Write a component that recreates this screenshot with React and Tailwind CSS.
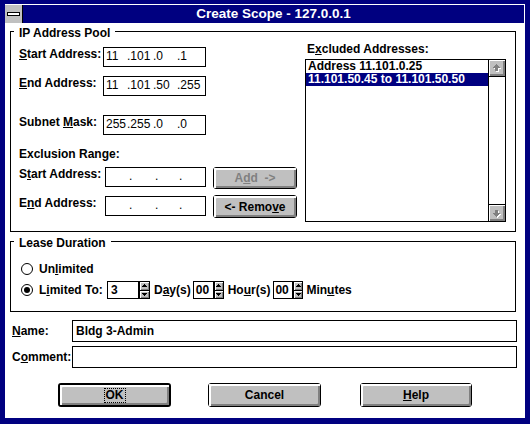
import React from "react";

function U({ children }) {
  return <span className="underline decoration-1 underline-offset-[1px]">{children}</span>;
}

function Btn({ children, size, isDefault, disabled }) {
  const outer = isDefault
    ? "border-2 border-black rounded-[3px] bg-[#c0c0c0]"
    : "border border-black rounded-[3px] bg-[#c0c0c0]";
  return (
    <div className={`${size} ${outer} flex`}>
      <div
        className={`flex-1 flex items-center justify-center rounded-[1px] shadow-[inset_1px_1px_0_#fff,inset_2px_2px_0_#fff,inset_-1px_-1px_0_#808080,inset_-2px_-2px_0_#808080] ${
          disabled ? "text-[#808080]" : "text-black"
        }`}
      >
        {children}
      </div>
    </div>
  );
}

function IpBox({ parts, size }) {
  return (
    <div className={`${size} h-[20px] border border-black flex items-start pt-[1px] pl-[2px] font-normal`}>
      <div className="w-[21px] h-[14px] whitespace-nowrap">{parts[0]}</div>
      <div className="w-[26px] h-[14px] whitespace-nowrap">{parts[1]}</div>
      <div className="w-[24px] h-[14px] whitespace-nowrap">{parts[2]}</div>
      <div className="flex-1 h-[14px] whitespace-nowrap">{parts[3]}</div>
    </div>
  );
}

function Tri({ up }) {
  return (
    <svg width="5" height="3" viewBox="0 0 5 3" shapeRendering="crispEdges">
      {up ? (
        <>
          <rect x="2" y="0" width="1" height="1" fill="#000" />
          <rect x="1" y="1" width="3" height="1" fill="#000" />
          <rect x="0" y="2" width="5" height="1" fill="#000" />
        </>
      ) : (
        <>
          <rect x="0" y="0" width="5" height="1" fill="#000" />
          <rect x="1" y="1" width="3" height="1" fill="#000" />
          <rect x="2" y="2" width="1" height="1" fill="#000" />
        </>
      )}
    </svg>
  );
}

function Spinner({ size }) {
  return (
    <div className={`${size} h-[18px] shrink-0 border border-black flex flex-col bg-[#c0c0c0]`}>
      <div className="flex-1 border-b border-black flex items-center justify-center shadow-[inset_1px_1px_0_#fff,inset_-1px_-1px_0_#808080]">
        <Tri up />
      </div>
      <div className="flex-1 flex items-center justify-center shadow-[inset_1px_1px_0_#fff,inset_-1px_-1px_0_#808080]">
        <Tri />
      </div>
    </div>
  );
}

function Radio({ checked }) {
  return (
    <div className="w-[12px] h-[12px] shrink-0 rounded-full border border-black bg-white flex items-center justify-center">
      {checked ? <div className="w-[6px] h-[6px] rounded-full bg-black" /> : null}
    </div>
  );
}

function ScrollArrow({ up }) {
  return (
    <div className="h-[16px] bg-[#c0c0c0] shadow-[inset_1px_1px_0_#fff,inset_-1px_-1px_0_#808080,inset_-2px_-2px_0_#808080] flex items-center justify-center">
      <svg width="16" height="16" viewBox="0 0 16 16" shapeRendering="crispEdges">
        {up ? (
          <g>
            <path d="M8 5 L12 9 L10 9 L10 12 L7 12 L7 9 L5 9 Z" fill="#fff" />
            <path d="M7 4 L11 8 L9 8 L9 11 L6 11 L6 8 L4 8 Z" fill="#808080" />
          </g>
        ) : (
          <g>
            <path d="M8 13 L12 9 L10 9 L10 6 L7 6 L7 9 L5 9 Z" fill="#fff" />
            <path d="M7 12 L11 8 L9 8 L9 5 L6 5 L6 8 L4 8 Z" fill="#808080" />
          </g>
        )}
      </svg>
    </div>
  );
}

export default function App() {
  return (
    <div className="w-[530px] h-[424px] bg-[#000080] pt-[4px] pl-[5px] pr-[5px] pb-[6px] font-['Liberation_Sans',Arial,sans-serif] text-[12px] font-bold text-black leading-[14px]">
      <div className="w-full h-full bg-white flex flex-col">
        {/* Title bar */}
        <div className="mt-[1px] mr-[1px] h-[18px] bg-[#000080] flex">
          <div className="w-[18px] h-full bg-[#c0c0c0] border-r border-black flex items-center justify-center">
            <div className="w-[13px] h-[4px] border border-black bg-white" />
          </div>
          <div className="flex-1 flex items-center justify-center text-white text-[13.5px]">
            Create Scope - 127.0.0.1
          </div>
        </div>

        {/* IP Address Pool */}
        <div className="ml-[5px] mt-[8px] w-[506px] h-[201px] border border-black flex flex-col">
          <div className="-mt-[6px] ml-[3px] px-[5px] w-fit bg-white h-[14px]">IP Address Pool</div>
          <div className="flex">
            <div className="w-[294px] flex flex-col">
              <div className="mt-[7px] flex h-[20px]">
                <div className="w-[92px] pl-[8px]">
                  <U>S</U>tart Address:
                </div>
                <IpBox size="w-[103px]" parts={["11", ".101", ".0", ".1"]} />
              </div>
              <div className="mt-[9px] flex h-[20px]">
                <div className="w-[92px] pl-[8px]">
                  <U>E</U>nd Address:
                </div>
                <IpBox size="w-[103px]" parts={["11", ".101", ".50", ".255"]} />
              </div>
              <div className="mt-[19px] flex h-[20px]">
                <div className="w-[92px] pl-[8px]">
                  Subnet <U>M</U>ask:
                </div>
                <IpBox size="w-[103px]" parts={["255", ".255", ".0", ".0"]} />
              </div>
              <div className="mt-[12px] h-[14px] pl-[8px]">Exclusion Range:</div>
              <div className="mt-[6px] flex h-[22px] items-start">
                <div className="w-[94px] pl-[8px]">
                  S<U>t</U>art Address:
                </div>
                <IpBox size="w-[101px]" parts={["", ".", ".", "."]} />
                <div className="ml-[7px]">
                  <Btn size="w-[84px] h-[22px]" disabled>
                    <span>
                      A<U>d</U>d&nbsp;&nbsp;-&gt;
                    </span>
                  </Btn>
                </div>
              </div>
              <div className="mt-[6px] flex h-[23px] items-start">
                <div className="w-[94px] pl-[8px] mt-[1px]">
                  E<U>n</U>d Address:
                </div>
                <div className="mt-[1px]">
                  <IpBox size="w-[101px]" parts={["", ".", ".", "."]} />
                </div>
                <div className="ml-[7px]">
                  <Btn size="w-[84px] h-[23px]">
                    <span>
                      &lt;- Remo<U>v</U>e
                    </span>
                  </Btn>
                </div>
              </div>
            </div>

            <div className="flex flex-col">
              <div className="mt-[2px] h-[14px] pl-[2px]">
                E<U>x</U>cluded Addresses:
              </div>
              <div className="mt-[3px] w-[201px] h-[163px] border border-black flex">
                <div className="flex-1 flex flex-col">
                  <div className="h-[13px] leading-[13px] pl-[2px]">Address 11.101.0.25</div>
                  <div className="h-[13px] leading-[13px] pl-[2px] bg-[#000080] text-white">
                    11.101.50.45 to 11.101.50.50
                  </div>
                </div>
                <div className="w-[17px] border-l border-black flex flex-col">
                  <div className="border-b border-black">
                    <ScrollArrow up />
                  </div>
                  <div className="flex-1" />
                  <div className="border-t border-black">
                    <ScrollArrow />
                  </div>
                </div>
              </div>
            </div>
          </div>
        </div>

        {/* Lease Duration */}
        <div className="ml-[5px] mt-[9px] w-[506px] h-[71px] border border-black flex flex-col">
          <div className="-mt-[6px] ml-[3px] px-[5px] w-fit bg-white h-[14px]">Lease Duration</div>
          <div className="mt-[12px] ml-[10px] flex items-center h-[14px]">
            <Radio />
            <span className="ml-[6px]">
              Un<U>l</U>imited
            </span>
          </div>
          <div className="mt-[5px] ml-[10px] flex items-center h-[18px] whitespace-nowrap">
            <Radio checked />
            <span className="ml-[6px] w-[68px] shrink-0">
              L<U>i</U>mited To:
            </span>
            <div className="w-[32px] h-[18px] shrink-0 border border-black pl-[3px] flex items-center">3</div>
            <Spinner size="w-[11px]" />
            <span className="ml-[4px] shrink-0">
              D<U>a</U>y(s)
            </span>
            <div className="ml-[2px] w-[21px] h-[18px] shrink-0 border border-black pl-[2px] flex items-center">00</div>
            <Spinner size="w-[10px]" />
            <span className="ml-[4px] shrink-0">
              Ho<U>u</U>r(s)
            </span>
            <div className="ml-[3px] w-[20px] h-[18px] shrink-0 border border-black pl-[1px] flex items-center">00</div>
            <Spinner size="w-[10px]" />
            <span className="ml-[3px] shrink-0">
              Min<U>u</U>tes
            </span>
          </div>
        </div>

        {/* Name / Comment */}
        <div className="mt-[8px] ml-[7px] flex h-[22px]">
          <div className="w-[60px] flex items-center">
            <span>
              <U>N</U>ame:
            </span>
          </div>
          <div className="w-[445px] h-[22px] border border-black pl-[3px] flex items-center">Bldg 3-Admin</div>
        </div>
        <div className="mt-[4px] ml-[7px] flex h-[22px]">
          <div className="w-[60px] flex items-center">
            <span>
              C<U>o</U>mment:
            </span>
          </div>
          <div className="w-[445px] h-[22px] border border-black" />
        </div>

        {/* Buttons */}
        <div className="mt-[15px] ml-[53px] flex h-[24px]">
          <Btn size="w-[113px] h-[24px]" isDefault>
            <span className="border border-dotted border-black px-[1px] leading-[13px]">OK</span>
          </Btn>
          <div className="ml-[37px]">
            <Btn size="w-[113px] h-[24px]">Cancel</Btn>
          </div>
          <div className="ml-[39px]">
            <Btn size="w-[112px] h-[24px]">
              <span>
                <U>H</U>elp
              </span>
            </Btn>
          </div>
        </div>
      </div>
    </div>
  );
}
